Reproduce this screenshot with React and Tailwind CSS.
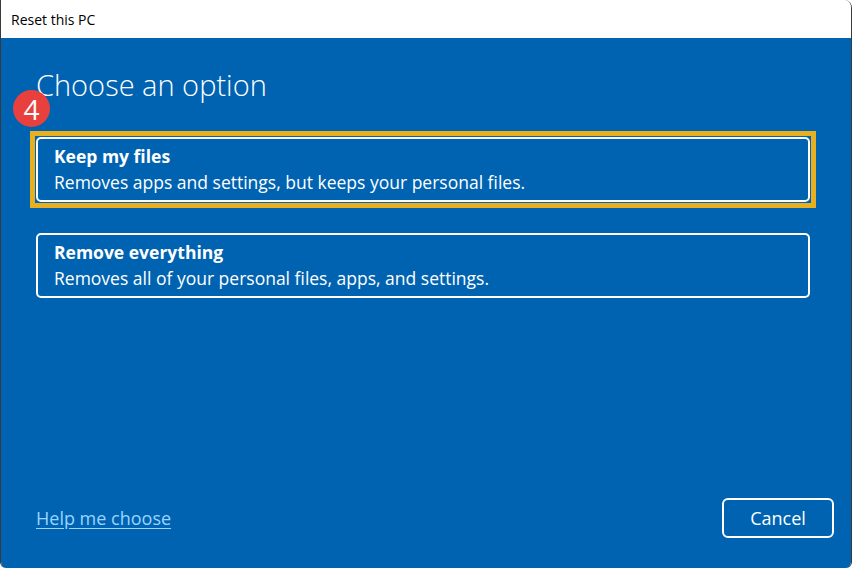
export default function App() {
  const font = { fontFamily: '"Segoe UI", "Open Sans", "Noto Sans", sans-serif' };
  return (
    <div className="w-[852px] h-[568px] bg-white" style={font}>
      <div className="w-full h-full flex flex-col border-x border-[#3a3a3a] rounded-tr-[8px] rounded-b-[6px] overflow-hidden">
        <div className="h-[38px] bg-white flex items-center pl-[10px] text-[14px] text-black">
          Reset this PC
        </div>
        <div className="flex-1 bg-[#0063b1] flex flex-col text-white relative">
          <h1 className="pl-[35px] pt-[27px] text-[29px] font-light leading-[40px] text-white">
            Choose an option
          </h1>
          <div className="absolute left-[12px] top-[52px] w-[37px] h-[37px] rounded-full bg-[#e8403d] flex items-center justify-center text-[28px] leading-none text-white">
            4
          </div>
          <div className="ml-[29px] mt-[26px] w-[786px] border-[5px] border-[#e8b020] p-[1px]">
            <button className="w-full h-[65px] border-2 border-white rounded-[5px] text-left pl-[16px] flex flex-col justify-center">
              <span className="text-[17.5px] font-bold leading-[25px]">Keep my files</span>
              <span className="text-[17.5px] leading-[26px]">Removes apps and settings, but keeps your personal files.</span>
            </button>
          </div>
          <button className="ml-[35px] mt-[25px] w-[774px] h-[65px] border-2 border-white rounded-[5px] text-left pl-[16px] flex flex-col justify-center">
            <span className="text-[17.5px] font-bold leading-[25px]">Remove everything</span>
            <span className="text-[17.5px] leading-[26px]">Removes all of your personal files, apps, and settings.</span>
          </button>
          <div className="mt-auto mb-[30px] flex items-center justify-between pl-[35px] pr-[17px]">
            <a className="text-[18px] text-[#9ad4ff] underline underline-offset-[3px]">Help me choose</a>
            <button className="w-[112px] h-[40px] border-2 border-white rounded-[6px] text-[18px] text-white">
              Cancel
            </button>
          </div>
        </div>
      </div>
    </div>
  );
}
